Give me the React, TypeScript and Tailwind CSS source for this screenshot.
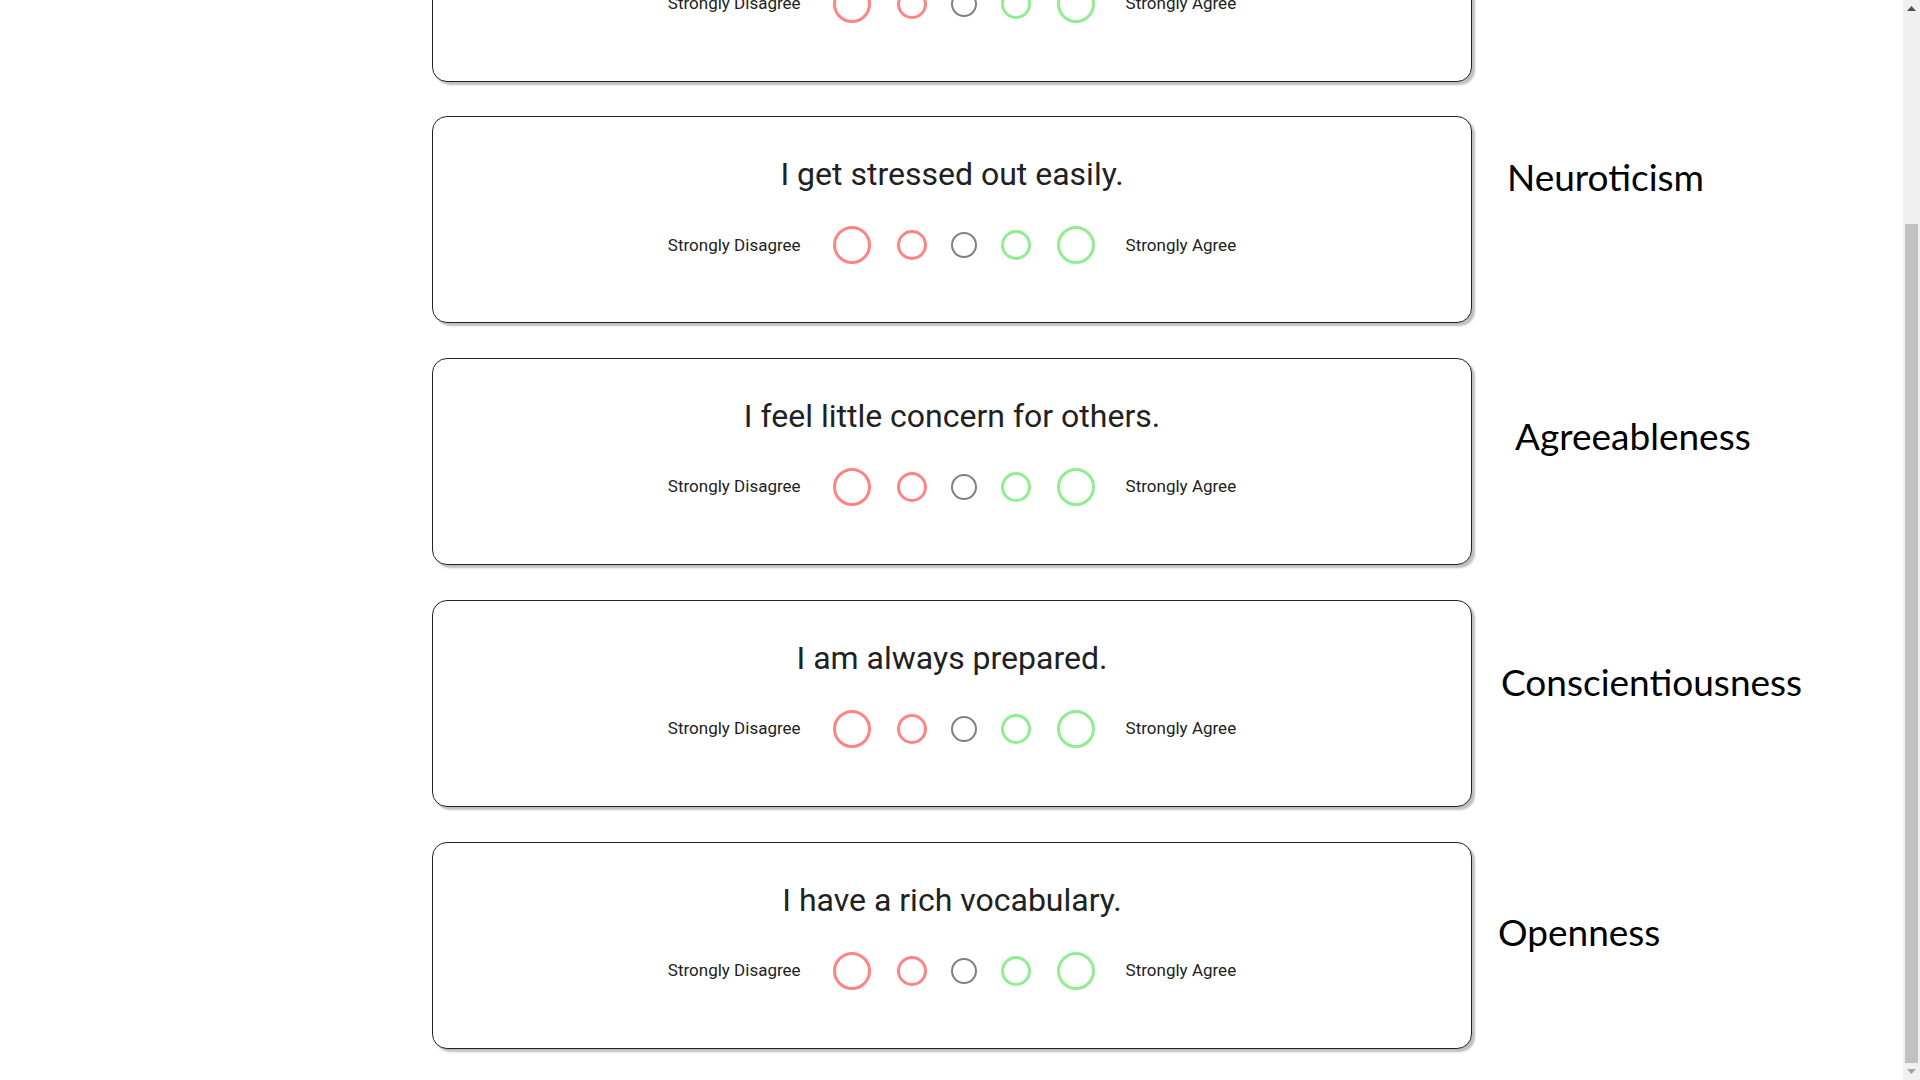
import React from 'react';

type Item = { q: string; trait?: string; traitClass: string };

const items: Item[] = [
  { q: 'I am the life of the party.', traitClass: '' },
  { q: 'I get stressed out easily.', trait: 'Neuroticism', traitClass: 'ml-[35px] mt-[37px]' },
  { q: 'I feel little concern for others.', trait: 'Agreeableness', traitClass: 'ml-[43px] mt-[54px]' },
  { q: 'I am always prepared.', trait: 'Conscientiousness', traitClass: 'ml-[29px] mt-[58px]' },
  { q: 'I have a rich vocabulary.', trait: 'Openness', traitClass: 'ml-[26px] mt-[66px]' },
];

const Scale: React.FC = () => (
  <div className="flex items-center justify-center text-[17px] text-[#222]">
    <span className="mr-[32px]">Strongly Disagree</span>
    <button className="w-[38px] h-[38px] rounded-full border-[3.5px] border-[#ff8585] mr-[26px]" />
    <button className="w-[30px] h-[30px] rounded-full border-[3px] border-[#ff8585] mr-[24px]" />
    <button className="w-[26px] h-[26px] rounded-full border-[2.5px] border-[#808080] mr-[24px]" />
    <button className="w-[30px] h-[30px] rounded-full border-[3px] border-[#90ee90] mr-[26px]" />
    <button className="w-[38px] h-[38px] rounded-full border-[3.5px] border-[#90ee90] mr-[31px]" />
    <span>Strongly Agree</span>
  </div>
);

export default function App() {
  return (
    <div className="w-[1920px] h-[1080px] flex overflow-hidden bg-white font-['Roboto',sans-serif]">
      <div className="flex-1 overflow-hidden">
        <div className="mt-[-125.5px] pl-[432px] flex flex-col gap-[34.8px]">
          {items.map((it, idx) => (
            <div key={idx} className="flex items-start">
              <div className="w-[1040px] h-[207px] shrink-0 bg-white border border-[#222] rounded-[15px] shadow-[3px_3px_2px_rgba(0,0,0,0.25)] pt-[33px] flex flex-col">
                <h2 className="text-[32px] leading-[48px] text-[#212121] text-center">{it.q}</h2>
                <div className="mt-[28px]">
                  <Scale />
                </div>
              </div>
              {it.trait && (
                <div className={`${it.traitClass} text-[37px] leading-[48px] text-black font-['Lato',sans-serif]`}>
                  {it.trait}
                </div>
              )}
            </div>
          ))}
        </div>
      </div>
      <div className="w-[17px] h-full bg-[#f0f0f0] flex flex-col items-center">
        <div className="h-[17px] w-full flex items-center justify-center">
          <svg width="9" height="5" viewBox="0 0 9 5"><path d="M0 5 L4.5 0 L9 5 Z" fill="#505050" /></svg>
        </div>
        <div className="flex-1 w-full flex flex-col px-[2px]">
          <div className="h-[207px]" />
          <div className="flex-1 bg-[#c1c1c1]" />
        </div>
        <div className="h-[17px] w-full flex items-center justify-center">
          <svg width="9" height="5" viewBox="0 0 9 5"><path d="M0 0 L9 0 L4.5 5 Z" fill="#a3a3a3" /></svg>
        </div>
      </div>
    </div>
  );
}
